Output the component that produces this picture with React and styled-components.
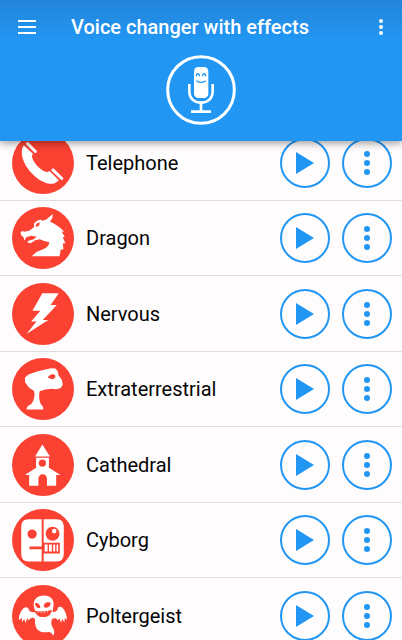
import React from 'react';
import styled, { createGlobalStyle } from 'styled-components';

const BLUE = '#2196f3';
const RED = '#fa4132';

const TelephoneIcon = () => (
  <svg viewBox="0 0 188 188" aria-hidden="true">
    <path
      fill="#fff"
      d="M36 40L64 67C59 71 60 77 64 85C71 99 82 110 96 118C104 122 109 122 114 118L142 146C134 156 121 159 108 156C86 151 62 132 46 108C34 90 28 70 30 56C31 49 33 43 36 40Z"
    />
    <path fill="none" stroke="#fff" strokeWidth="9" strokeLinecap="round" d="M47 35L71 59M124 115L151 141" />
  </svg>
);

const DragonIcon = () => (
  <svg viewBox="0 0 188 188" aria-hidden="true">
    <path
      fill="#fff"
      d="M26 77L30 73L38 75L54 71L67 61L67 49L74 43L86 38L93 42L104 38L112 31L124 21L122 34L115 44L128 51L143 61L158 74L151 75L160 91L154 92L162 110L154 111L156 128L148 129L144 149H60L73 137L92 129C104 125 112 118 113 107L98 103L84 98L70 101L57 110L46 108L50 102L66 98L75 90L58 87L43 92L38 102L35 92L28 86Z"
    />
    <path fill={RED} d="M71 58L75 50L84 46L83 55L76 60Z" />
  </svg>
);

const LightningIcon = () => (
  <svg viewBox="0 0 188 188" aria-hidden="true">
    <path fill="#fff" d="M92 31H142L117 67H136L93 112H110L44 155L74 117H58L86 84H62Z" />
  </svg>
);

const AlienIcon = () => (
  <svg viewBox="0 0 188 188" aria-hidden="true">
    <path
      fill="#fff"
      d="M39 60L50 50L78 40L118 31L132 32L139 41L141 52L151 66L154 80L148 91L134 95L118 93L98 96L84 101C81 112 82 126 86 137L94 148L95 156H44L46 148L60 138C68 125 70 112 67 100L52 90L40 74Z"
    />
    <path fill={RED} d="M108 60C113 51 122 47 130 51C134 56 131 62 125 64C119 65 114 60 108 60Z" />
  </svg>
);

const ChurchIcon = () => (
  <svg viewBox="0 0 188 188" aria-hidden="true">
    <path fill="#fff" d="M92 32L115 68H70Z" />
    <path
      fill="#fff"
      fillRule="evenodd"
      d="M73 72H112V102L147 124H134V157H106V135A13 13 0 0 0 80 135V157H52V124H39L73 102ZM92 77A11 11 0 1 0 92 99A11 11 0 1 0 92 77Z"
    />
  </svg>
);

const CyborgIcon = () => (
  <svg viewBox="0 0 188 188" aria-hidden="true">
    <path fill="#fff" d="M50 31H90V159H50Q28 159 28 137V53Q28 31 50 31ZM96 31H135Q157 31 157 53V137Q157 159 135 159H96Z" />
    <circle cx="61" cy="76" r="14" fill={RED} />
    <circle cx="123" cy="75" r="21" fill={RED} />
    <circle cx="128" cy="67" r="7" fill="#fff" />
    <path fill={RED} d="M53 114H93V122H53ZM94 102H145V135H94Z" />
    <path fill="#fff" d="M99 108H108V129H99ZM112 108H121V129H112ZM125 108H131V129H125ZM135 108H140V129H135Z" />
  </svg>
);

const GhostIcon = () => (
  <svg viewBox="0 0 188 188" aria-hidden="true">
    <path
      fill="#fff"
      d="M66 64C64 44 77 32 97 32C117 32 128 44 126 62L123 82C132 83 138 78 139 70C141 65 148 64 153 69C161 77 166 90 167 106L160 100L159 114L152 102L149 115L144 102L138 107C135 99 128 100 121 103C117 116 120 125 125 131C130 140 129 149 124 154C122 146 117 142 108 143C88 146 74 138 71 122C69 114 71 108 69 102C63 97 56 99 51 108L46 101L41 115L37 103L30 113L30 100L21 106C21 91 27 77 36 70C42 65 49 67 50 73C52 81 60 84 71 82Z"
    />
    <path fill={RED} d="M70 55C78 53 86 60 86 69C77 72 70 65 70 55ZM97 67C94 57 104 49 117 54C118 66 107 72 97 67ZM69 78C85 82 104 81 121 75C119 90 109 98 94 97C81 97 72 91 69 78Z" />
    <path fill="none" stroke="#fff" strokeWidth="2" d="M79 81V85M88 82V86M98 82V86M108 80V84" />
  </svg>
);

const effects = [
  { name: 'Telephone', Icon: TelephoneIcon },
  { name: 'Dragon', Icon: DragonIcon },
  { name: 'Nervous', Icon: LightningIcon },
  { name: 'Extraterrestrial', Icon: AlienIcon },
  { name: 'Cathedral', Icon: ChurchIcon },
  { name: 'Cyborg', Icon: CyborgIcon },
  { name: 'Poltergeist', Icon: GhostIcon }
];

const App = () => {
  return (
    <>
      <GlobalStyle />
      <Screen>
        <Header>
          <Toolbar>
            <IconButton aria-label="Open menu">
              <svg width="20" height="14" viewBox="0 0 20 14">
                <path stroke="#fff" strokeWidth="2" d="M1 1H19M1 7H19M1 13H19" />
              </svg>
            </IconButton>
            <Title>Voice changer with effects</Title>
            <IconButton aria-label="More options">
              <svg width="6" height="16" viewBox="0 0 6 16" fill="#fff">
                <circle cx="3" cy="2" r="2" />
                <circle cx="3" cy="8" r="2" />
                <circle cx="3" cy="14" r="2" />
              </svg>
            </IconButton>
          </Toolbar>
          <RecordButton aria-label="Record">
            <svg width="70" height="70" viewBox="0 0 210 210">
              <circle cx="105" cy="105" r="100" fill="none" stroke="#fff" strokeWidth="9" />
              <rect x="84" y="36" width="43" height="93" rx="13" fill="#fff" />
              <path
                fill="none"
                stroke={BLUE}
                strokeWidth="4"
                d="M91 64C91 53 100 53 100 64M110 64C110 53 119 53 119 64M91 77C96 84 114 84 119 77"
              />
              <path
                fill="none"
                stroke="#fff"
                strokeWidth="8"
                d="M70 87V109C70 130 84 143 105 143C126 143 140 130 140 109V87M105 143V170M75 170H135"
              />
            </svg>
          </RecordButton>
        </Header>
        <EffectList>
          {effects.map(({ name, Icon }) => (
            <EffectRow key={name}>
              <EffectBadge>
                <Icon />
              </EffectBadge>
              <EffectName>{name}</EffectName>
              <RoundButton aria-label={`Play ${name}`}>
                <svg width="18" height="24" viewBox="0 0 18 24">
                  <path fill={BLUE} d="M0 1L18 12L0 23Z" />
                </svg>
              </RoundButton>
              <RoundButton aria-label={`${name} options`}>
                <svg width="6" height="24" viewBox="0 0 6 24" fill={BLUE}>
                  <circle cx="3" cy="3" r="3" />
                  <circle cx="3" cy="12" r="3" />
                  <circle cx="3" cy="21" r="3" />
                </svg>
              </RoundButton>
            </EffectRow>
          ))}
        </EffectList>
      </Screen>
    </>
  );
};

export default App;

const GlobalStyle = createGlobalStyle`
  * {
    box-sizing: border-box;
  }

  body {
    margin: 0;
    background: #fffcfe;
    color: #050505;
    font-family: Roboto, "Liberation Sans", sans-serif;
  }

  button {
    padding: 0;
    border: 0;
    background: none;
    cursor: pointer;
  }

  svg {
    display: block;
  }
`;

const Screen = styled.div`
  height: 100vh;
  overflow: hidden;
`;

const Header = styled.header`
  position: relative;
  z-index: 1;
  display: flex;
  flex-direction: column;
  align-items: center;
  gap: 2px;
  padding-bottom: 16px;
  background: linear-gradient(#2385da, ${BLUE} 40px);
  box-shadow: 0 2px 8px rgba(0, 0, 0, 0.4);
`;

const Toolbar = styled.div`
  display: flex;
  align-items: center;
  width: 100%;
  height: 53px;
  padding: 0 8px;
`;

const IconButton = styled.button`
  display: flex;
  align-items: center;
  justify-content: center;
  width: 38px;
  height: 40px;
  flex: none;

  &:last-child {
    width: 27px;
  }
`;

const Title = styled.h1`
  flex: 1;
  margin: 0 0 0 25px;
  color: #fff;
  font-size: 20px;
  font-weight: 500;
  line-height: 24px;
`;

const RecordButton = styled.button`
  border-radius: 50%;
`;

/* The list is scrolled a little, so the first row slides under the header. */
const EffectList = styled.ul`
  display: grid;
  grid-auto-rows: 76px 75px;
  margin: -16px 0 0;
  padding: 0;
  list-style: none;
`;

const EffectRow = styled.li`
  display: flex;
  align-items: center;
  gap: 12px;
  padding: 0 10px 0 12px;
  border-bottom: 1px solid #dedcdd;
`;

const EffectBadge = styled.div`
  flex: none;
  width: 62px;
  height: 62px;
  border-radius: 50%;
  background: ${RED};
`;

const EffectName = styled.span`
  flex: 1;
  font-size: 20px;
  line-height: 24px;
`;

const RoundButton = styled.button`
  display: flex;
  align-items: center;
  justify-content: center;
  flex: none;
  width: 50px;
  height: 50px;
  border: 2px solid ${BLUE};
  border-radius: 50%;
`;
